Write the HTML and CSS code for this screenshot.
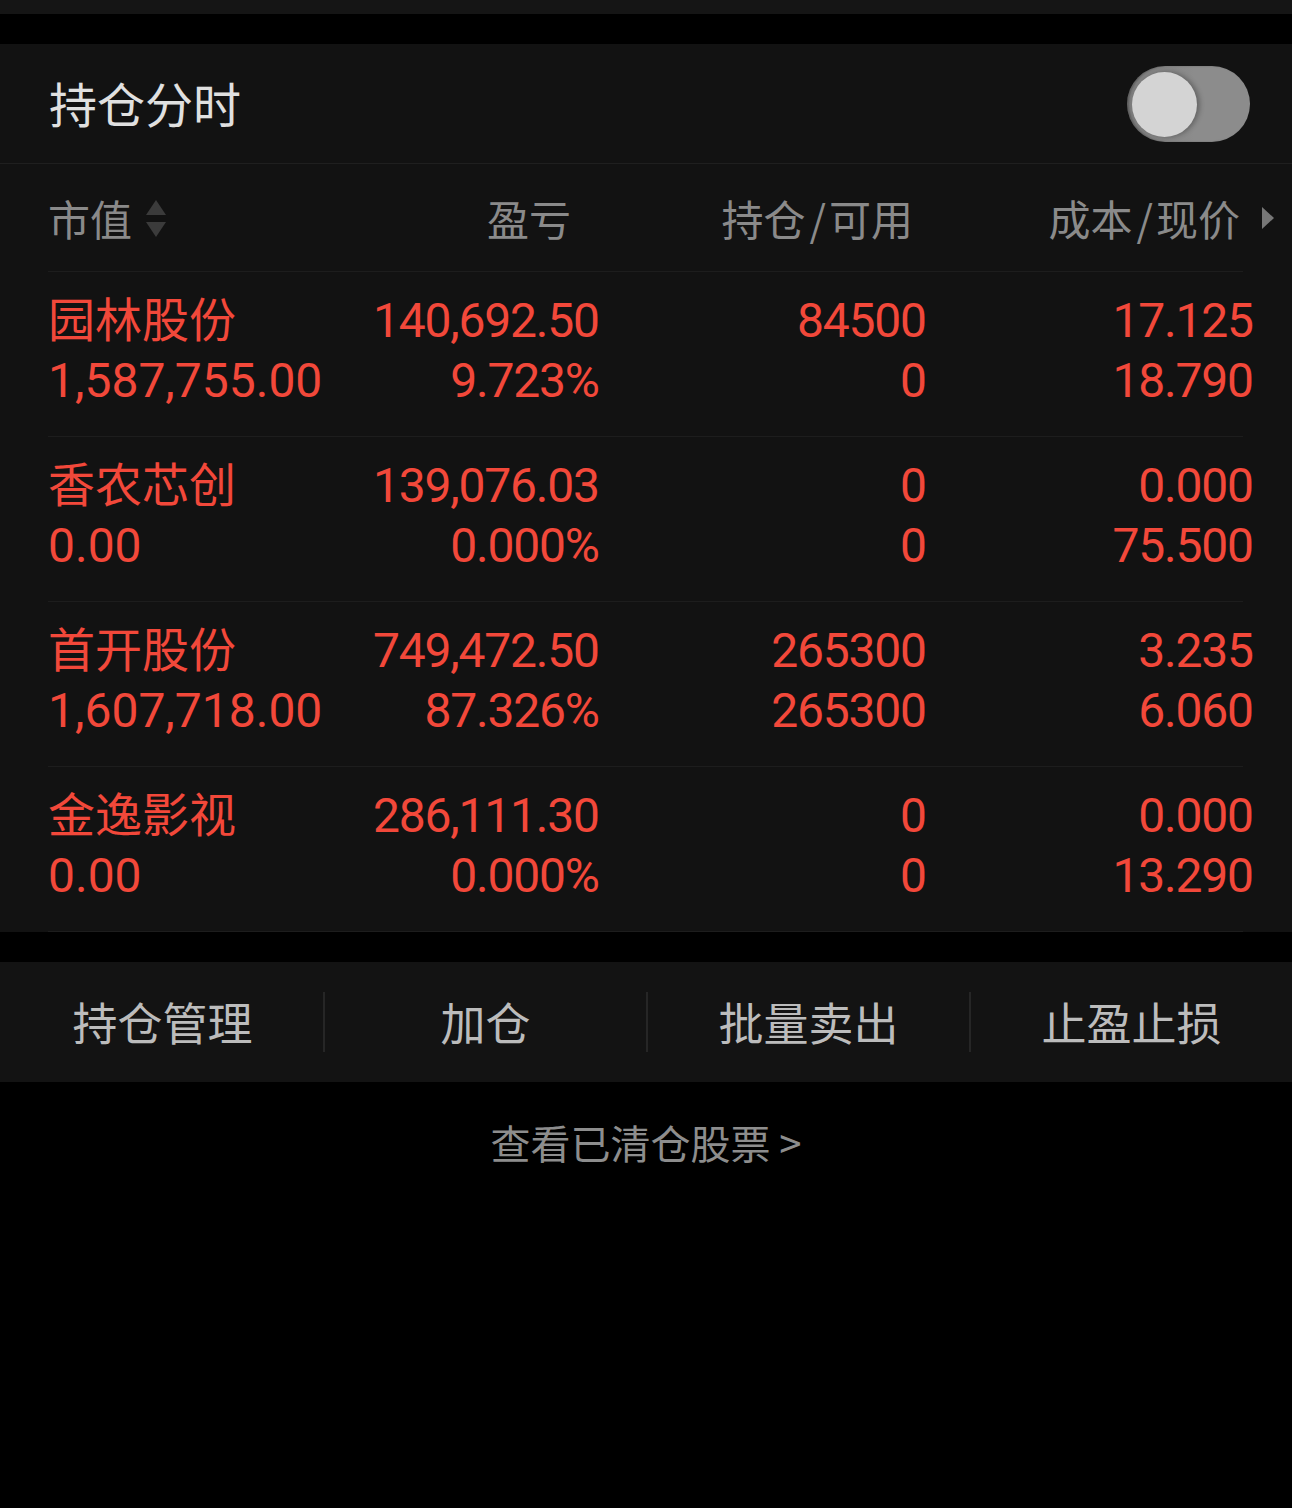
FILE: index.html
```html
<!DOCTYPE html>
<html lang="zh-CN">
<head>
<meta charset="utf-8">
<title>持仓</title>
<link rel="stylesheet" href="styles.css">
</head>
<body>
<div class="topstrip"></div>
<div class="gap"></div>
<section class="panel">
  <div class="title-row">
    <div class="title">持仓分时</div>
    <div class="toggle"><span class="knob"></span></div>
  </div>
  <div class="head grid">
    <div class="hc hc1">市值<span class="sort"><i class="up"></i><i class="down"></i></span></div>
    <div class="hc hc2">盈亏</div>
    <div class="hc hc3">持仓<span class="sl">/</span>可用</div>
    <div class="hc hc4">成本<span class="sl">/</span>现价<span class="arrow"></span></div>
  </div>
  <div class="row grid">
    <div class="c c1"><div class="name">园林股份</div><div class="num">1,587,755.00</div></div>
    <div class="c"><div class="num">140,692.50</div><div class="num">9.723%</div></div>
    <div class="c"><div class="num">84500</div><div class="num">0</div></div>
    <div class="c c4"><div class="num">17.125</div><div class="num">18.790</div></div>
  </div>
  <div class="row grid">
    <div class="c c1"><div class="name">香农芯创</div><div class="num">0.00</div></div>
    <div class="c"><div class="num">139,076.03</div><div class="num">0.000%</div></div>
    <div class="c"><div class="num">0</div><div class="num">0</div></div>
    <div class="c c4"><div class="num">0.000</div><div class="num">75.500</div></div>
  </div>
  <div class="row grid">
    <div class="c c1"><div class="name">首开股份</div><div class="num">1,607,718.00</div></div>
    <div class="c"><div class="num">749,472.50</div><div class="num">87.326%</div></div>
    <div class="c"><div class="num">265300</div><div class="num">265300</div></div>
    <div class="c c4"><div class="num">3.235</div><div class="num">6.060</div></div>
  </div>
  <div class="row grid">
    <div class="c c1"><div class="name">金逸影视</div><div class="num">0.00</div></div>
    <div class="c"><div class="num">286,111.30</div><div class="num">0.000%</div></div>
    <div class="c"><div class="num">0</div><div class="num">0</div></div>
    <div class="c c4"><div class="num">0.000</div><div class="num">13.290</div></div>
  </div>
</section>
<div class="gap"></div>
<nav class="actions">
  <div class="act">持仓管理</div>
  <div class="act">加仓</div>
  <div class="act">批量卖出</div>
  <div class="act">止盈止损</div>
</nav>
<div class="link">查看已清仓股票 &gt;</div>
</body>
</html>
```
FILE: styles.css
```css
html, body {
  margin: 0;
  padding: 0;
  background: #000;
}
body {
  width: 1292px;
  min-height: 1508px;
  font-family: "Noto Sans CJK SC", "Noto Sans", sans-serif;
  color: #ddd;
}
.topstrip {
  height: 14px;
  background: #151515;
}
.gap {
  height: 30px;
  background: #000;
}
.panel {
  background: #121212;
}
.title-row {
  height: 119px;
  border-bottom: 1px solid #1f1f1f;
  display: flex;
  align-items: center;
  justify-content: space-between;
  padding: 0 42px 0 49px;
}
.title {
  font-size: 48px;
  color: #e0e0e0;
  line-height: 1;
  margin-top: -4px;
}
.toggle {
  width: 123px;
  height: 76px;
  border-radius: 38px;
  background: linear-gradient(90deg, #7e7e7e 0%, #8c8c8c 55%, #8c8c8c 100%);
  box-sizing: border-box;
  padding: 6px 0 0 5px;
  box-shadow: inset 2px 0 2px rgba(0,0,0,0.25);
}
.knob {
  display: block;
  width: 65px;
  height: 65px;
  border-radius: 50%;
  background: #d4d4d4;
  box-shadow: 3px 0 5px rgba(0,0,0,0.28);
}
.grid {
  display: grid;
  grid-template-columns: 282px 270px 327px 1fr;
  margin: 0 49px 0 48px;
  border-bottom: 1px solid #1d1d1d;
}
.head {
  height: 107px;
  align-items: center;
}
.hc {
  font-size: 42px;
  color: #8a8a8a;
  line-height: 1;
  display: flex;
  align-items: center;
  justify-content: flex-end;
}
.hc1 { justify-content: flex-start; }
.hc2 { padding-right: 29px; }
.hc3 { padding-right: 14px; }
.hc4 { margin-right: -31px; }
.sl {
  margin: 0 3px 0 4px;
}
.sort {
  display: flex;
  flex-direction: column;
  margin-left: 14px;
  gap: 7px;
  margin-top: 2px;
}
.sort i {
  display: block;
  width: 0;
  height: 0;
  border-left: 10.5px solid transparent;
  border-right: 10.5px solid transparent;
}
.sort .up { border-bottom: 15px solid #3b3b3b; }
.sort .down { border-top: 15px solid #3b3b3b; }
.arrow {
  display: block;
  width: 0;
  height: 0;
  border-top: 11.5px solid transparent;
  border-bottom: 11.5px solid transparent;
  border-left: 12px solid #777;
  margin-left: 22px;
}
.row {
  padding-top: 19px;
  height: 145px;
}
.c {
  text-align: right;
  color: #f2483a;
}
.c4 { margin-right: -11px; }
.c1 { text-align: left; }
.name {
  font-size: 47px;
  line-height: 52px;
  height: 60px;
}
.num {
  font-family: "Roboto", "Liberation Sans", sans-serif;
  font-size: 48px;
  line-height: 60px;
  height: 60px;
  letter-spacing: -1.2px;
  margin-right: 1.2px;
}
.c1 .num {
  margin-right: 0;
  letter-spacing: 0;
}
.actions {
  height: 120px;
  background: #131313;
  display: grid;
  grid-template-columns: repeat(4, 1fr);
  align-items: center;
}
.act {
  font-size: 45px;
  color: #bcbcbc;
  text-align: center;
  line-height: 60px;
  border-left: 2px solid #262626;
}
.act:first-child { border-left-color: transparent; }
.link {
  text-align: center;
  font-size: 40px;
  color: #8d8d8d;
  margin-top: 37px;
  line-height: 46px;
}
```
